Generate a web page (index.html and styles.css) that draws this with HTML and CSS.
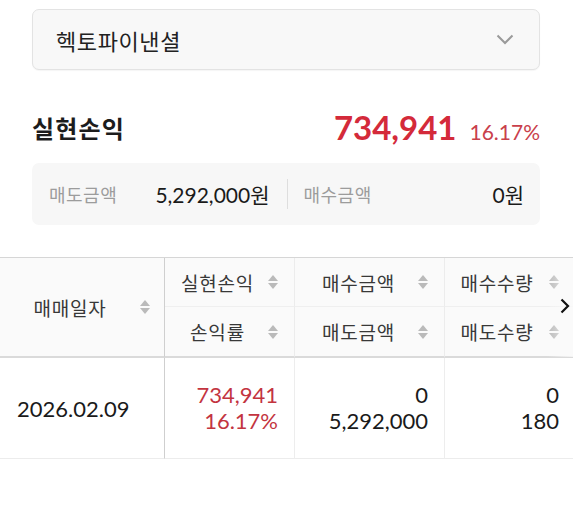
FILE: index.html
```html
<!DOCTYPE html>
<html lang="ko">
<head>
<meta charset="utf-8">
<link rel="stylesheet" href="styles.css">
</head>
<body>
<div class="top">
  <div class="select">
    <span class="select-text">헥토파이낸셜</span>
    <svg class="chev" width="18" height="11" viewBox="0 0 18 11"><path d="M1.5 1.5 L9 9 L16.5 1.5" fill="none" stroke="#9a9a9a" stroke-width="2"/></svg>
  </div>
  <div class="pl-row">
    <span class="pl-title">실현손익</span>
    <span class="pl-values"><span class="pl-amount">734,941</span><span class="pl-rate">16.17%</span></span>
  </div>
  <div class="summary">
    <div class="sum-item"><span class="sum-label">매도금액</span><span class="sum-value">5,292,000원</span></div>
    <div class="sum-divider"></div>
    <div class="sum-item"><span class="sum-label">매수금액</span><span class="sum-value">0원</span></div>
  </div>
</div>
<div class="table-wrap">
  <div class="grid">
    <div class="th c1 span2"><span class="lbl">매매일자</span><span class="sort"></span></div>
    <div class="th c2 r1"><span class="lbl">실현손익</span><span class="sort"></span></div>
    <div class="th c3 r1"><span class="lbl">매수금액</span><span class="sort"></span></div>
    <div class="th c4 r1"><span class="lbl">매수수량</span><span class="sort"></span></div>
    <div class="th c2 r2"><span class="lbl">손익률</span><span class="sort"></span></div>
    <div class="th c3 r2"><span class="lbl">매도금액</span><span class="sort"></span></div>
    <div class="th c4 r2"><span class="lbl">매도수량</span><span class="sort"></span></div>
    <div class="td c1 date">2026.02.09</div>
    <div class="td c2 num red"><span>734,941</span><span>16.17%</span></div>
    <div class="td c3 num"><span>0</span><span>5,292,000</span></div>
    <div class="td c4 num"><span>0</span><span>180</span></div>
  </div>
  <div class="fade"></div>
  <svg class="next" width="12" height="16" viewBox="0 0 12 16"><path d="M2.5 1.5 L9 8 L2.5 14.5" fill="none" stroke="#111" stroke-width="2.2"/></svg>
</div>
</body>
</html>
```
FILE: styles.css
```css
* { box-sizing: border-box; }
html, body { margin: 0; padding: 0; background: #fff; }
body {
  font-family: Lato, "Noto Sans CJK KR", sans-serif;
  color: #1a1a1a;
  width: 573px;
  overflow: hidden;
}
.top { padding: 9px 33px 0 32px; }
.select {
  height: 61px;
  border: 1px solid #e3e3e3;
  border-radius: 7px;
  background: #f8f8f8;
  display: flex;
  align-items: center;
  justify-content: space-between;
  padding: 0 25px 0 23px;
  box-shadow: 0 1px 1px rgba(0,0,0,0.04);
}
.select-text { font-size: 22px; color: #222; letter-spacing: 0.6px; }
.pl-row {
  margin-top: 37px;
  height: 40px;
  display: flex;
  align-items: center;
  justify-content: space-between;
}
.pl-title { font-size: 24px; font-weight: 700; color: #1c1c1c; letter-spacing: 1.2px; }
.pl-values { display: flex; align-items: baseline; gap: 13px; }
.pl-amount { font-size: 33px; font-weight: 700; color: #d42a3a; }
.pl-rate { font-size: 21px; color: #c9404b; }
.summary {
  margin-top: 16px;
  height: 62px;
  background: #f7f7f7;
  border-radius: 7px;
  display: flex;
  align-items: center;
  padding: 0 16px 0 17px;
}
.sum-item { flex: 1; display: flex; justify-content: space-between; align-items: center; }
.sum-label { font-size: 18px; color: #9c9c9c; letter-spacing: 0.5px; }
.sum-value { font-size: 21px; color: #1a1a1a; }
.sum-divider { width: 1px; height: 30px; background: #dedede; margin: 0 16px 0 17px; }
.table-wrap {
  position: relative;
  margin-top: 32px;
  width: 573px;
  overflow: hidden;
}
.grid {
  display: grid;
  width: 575px;
  grid-template-columns: 165px 130px 150px 130px;
  grid-template-rows: 49px 51px 101px;
  border-top: 1px solid #d6d6d6;
}
.th {
  background: #fafafa;
  display: flex;
  align-items: center;
  font-size: 19px;
  color: #383838;
  letter-spacing: 0.8px;
  padding-right: 16px;
  border-right: 1px solid #ececec;
}
.th .lbl { flex: 1; text-align: center; }
.sort {
  width: 10px;
  height: 16px;
  position: relative;
  flex: none;
}
.sort::before, .sort::after {
  content: "";
  position: absolute;
  left: 0;
  border-left: 5px solid transparent;
  border-right: 5px solid transparent;
}
.sort::before { top: 1px; border-bottom: 6px solid #bababa; }
.sort::after { bottom: 1px; border-top: 6px solid #bababa; }
.span2 { grid-row: 1 / span 2; grid-column: 1; border-bottom: 2px solid #dadada; padding-right: 14px; }
.c1 { border-right: 1px solid #cfcfcf; }
.r1 { grid-row: 1; border-bottom: 1px solid #efefef; }
.r2 { grid-row: 2; border-bottom: 2px solid #dadada; }
.th.c2 { grid-column: 2; padding-left: 2px; }
.th.c3 { grid-column: 3; padding-left: 4px; }
.th.c4 { grid-column: 4; padding-left: 0; }
.c4 { border-right: none; }
.td {
  grid-row: 3;
  border-bottom: 1px solid #ececec;
  font-size: 22px;
  color: #1a1a1a;
}
.td.c2, .td.c3 { border-right: 1px solid #ededed; }
.date { grid-column: 1; display: flex; align-items: center; padding-left: 17px; }
.num {
  display: flex;
  flex-direction: column;
  justify-content: center;
  align-items: flex-end;
  padding-right: 16px;
  line-height: 26px;
}
.td.c2 { grid-column: 2; }
.td.c3 { grid-column: 3; }
.td.c4 { grid-column: 4; }
.red { color: #c3343f; }
.fade {
  position: absolute;
  top: 1px;
  right: 0;
  width: 26px;
  height: 99px;
  background: linear-gradient(to right, rgba(250,250,250,0), rgba(250,250,250,0.85));
}
.next { position: absolute; left: 559px; top: 41px; }
```
